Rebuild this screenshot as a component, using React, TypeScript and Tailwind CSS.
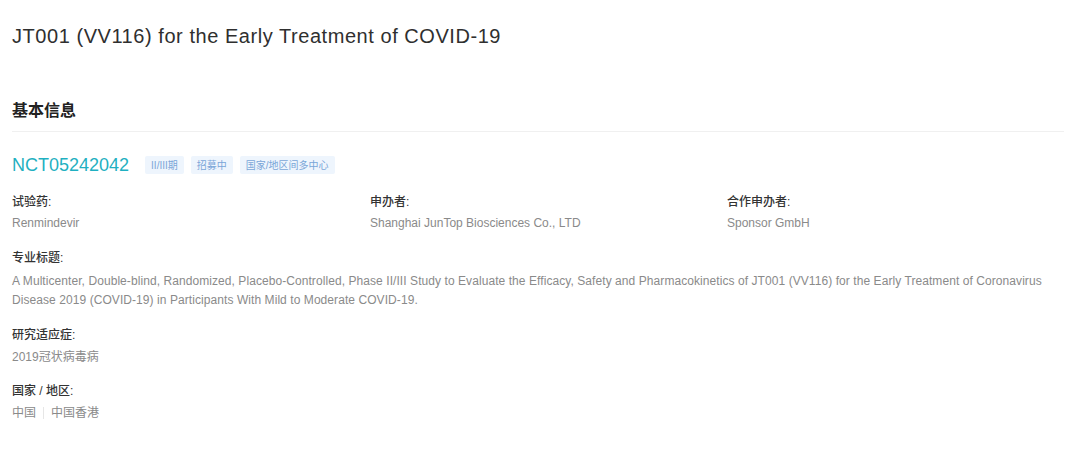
const font = { fontFamily: '"Liberation Sans", "Noto Sans CJK SC", sans-serif' };

const tags = ["II/III期", "招募中", "国家/地区间多中心"];

function Field({ label, children }: { label: string; children: React.ReactNode }) {
  return (
    <div>
      <div className="text-[12px] leading-[18px] font-medium text-[#333]">{label}</div>
      {children}
    </div>
  );
}

export default function App() {
  return (
    <div className="w-[1080px] h-[476px] bg-white pl-3 pr-4 pt-[22px]" style={font}>
      <h1 className="text-[20px] leading-[28px] text-[#2f2f2f] tracking-[0.55px]">
        JT001 (VV116) for the Early Treatment of COVID-19
      </h1>

      <h2 className="mt-[49px] pb-[8px] border-b border-[#f0f0f0] text-[16px] leading-[24px] font-semibold text-[#222]">
        基本信息
      </h2>

      <div className="mt-[21px] flex items-center">
        <span className="text-[18px] leading-[24px] text-[#1fb0c1]">NCT05242042</span>
        <div className="ml-[16px] flex gap-[7px]">
          {tags.map((t) => (
            <span
              key={t}
              className="h-[18px] px-[6px] flex items-center rounded-[2px] bg-[#eef5fd] text-[10px] text-[#7aa6d8]"
            >
              {t}
            </span>
          ))}
        </div>
      </div>

      <div className="mt-[16px] grid grid-cols-[358px_357px_1fr]">
        <Field label="试验药:">
          <div className="mt-[3px] text-[12px] leading-[18px] text-[#8a8a8a]">Renmindevir</div>
        </Field>
        <Field label="申办者:">
          <div className="mt-[3px] text-[12px] leading-[18px] text-[#8a8a8a]">
            Shanghai JunTop Biosciences Co., LTD
          </div>
        </Field>
        <Field label="合作申办者:">
          <div className="mt-[3px] text-[12px] leading-[18px] text-[#8a8a8a]">Sponsor GmbH</div>
        </Field>
      </div>

      <div className="mt-[17px]">
        <Field label="专业标题:">
          <p className="mt-[5px] text-[12px] leading-[19px] text-[#8a8a8a] tracking-[0.07px]">
            A Multicenter, Double-blind, Randomized, Placebo-Controlled, Phase II/III Study to Evaluate the
            Efficacy, Safety and Pharmacokinetics of JT001 (VV116) for the Early Treatment of Coronavirus
            Disease 2019 (COVID-19) in Participants With Mild to Moderate COVID-19.
          </p>
        </Field>
      </div>

      <div className="mt-[16px]">
        <Field label="研究适应症:">
          <div className="mt-[4px] text-[12px] leading-[18px] text-[#8a8a8a]">2019冠状病毒病</div>
        </Field>
      </div>

      <div className="mt-[16px]">
        <Field label="国家 / 地区:">
          <div className="mt-[4px] flex items-center text-[12px] leading-[18px] text-[#8a8a8a]">
            <span>中国</span>
            <span className="mx-[7px] w-px h-[12px] bg-[#e6e6e6]" />
            <span>中国香港</span>
          </div>
        </Field>
      </div>
    </div>
  );
}
